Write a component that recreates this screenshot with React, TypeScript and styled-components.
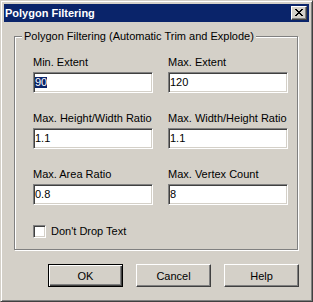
import React from 'react';
import styled, {createGlobalStyle} from "styled-components";

const face = '#d4d0c8';
const shadow = '#808080';
const dark = '#404040';
const caption = '#0a246a';
const uiFont = '"Liberation Sans", Arial, sans-serif';

const GlobalStyle = createGlobalStyle`
  * { box-sizing: border-box; }
  html, body {
    margin: 0;
    padding: 0;
    background: ${face};
  }
  body {
    font-family: ${uiFont};
    font-size: 11px;
    color: #000;
  }
`

const fields = [
    {label: 'Min. Extent', value: '90', selected: true},
    {label: 'Max. Extent', value: '120'},
    {label: 'Max. Height/Width Ratio', value: '1.1'},
    {label: 'Max. Width/Height Ratio', value: '1.1'},
    {label: 'Max. Area Ratio', value: '0.8'},
    {label: 'Max. Vertex Count', value: '8'},
];

const CloseGlyph = () => (
    <svg width="8" height="7" viewBox="0 0 8 7" shapeRendering="crispEdges">
        <path fill="#000" d="M0 0h2v1H0zM6 0h2v1H6zM1 1h2v1H1zM5 1h2v1H5zM2 2h4v1H2zM3 3h2v1H3zM2 4h4v1H2zM1 5h2v1H1zM5 5h2v1H5zM0 6h2v1H0zM6 6h2v1H6z"/>
    </svg>
);

export default function App() {
    return (
        <>
            <GlobalStyle/>
            <Window>
                <TitleBar>
                    <TitleText>Polygon Filtering</TitleText>
                    <CloseButton aria-label="Close"><CloseGlyph/></CloseButton>
                </TitleBar>
                <Body>
                    <GroupBox>
                        <Legend>Polygon Filtering (Automatic Trim and Explode)</Legend>
                        <FieldGrid>
                            {fields.map(f => (
                                <FieldCell key={f.label}>
                                    <Label>{f.label}</Label>
                                    <Field>
                                        {f.selected ? <Selected>{f.value}</Selected> : f.value}
                                    </Field>
                                </FieldCell>
                            ))}
                        </FieldGrid>
                        <CheckRow>
                            <CheckBox/>
                            <CheckLabel>Don't Drop Text</CheckLabel>
                        </CheckRow>
                    </GroupBox>
                    <ButtonRow>
                        <Button $default>OK</Button>
                        <Button>Cancel</Button>
                        <Button>Help</Button>
                    </ButtonRow>
                </Body>
            </Window>
        </>
    );
}

const Window = styled.div`
    width: 313px;
    height: 302px;
    display: flex;
    flex-direction: column;
    background: ${face};
    border: 1px solid;
    border-color: ${face} ${dark} ${dark} ${face};
    box-shadow: inset 1px 1px 0 #fff, inset -1px -1px 0 ${shadow};
    padding: 3px;
`

const TitleBar = styled.div`
    height: 18px;
    flex: none;
    display: flex;
    align-items: center;
    justify-content: space-between;
    background: ${caption};
    padding: 0 2px 0 1px;
`

const TitleText = styled.span`
    color: #fff;
    font-weight: bold;
    font-size: 11px;
    line-height: 18px;
`

const bevel = `
    border: 1px solid;
    border-color: #fff ${dark} ${dark} #fff;
    box-shadow: inset -1px -1px 0 ${shadow};
    background: ${face};
`

const CloseButton = styled.div`
    width: 16px;
    height: 14px;
    display: flex;
    align-items: center;
    justify-content: center;
    padding-bottom: 1px;
    ${bevel}
`

const Body = styled.div`
    flex: 1;
    display: flex;
    flex-direction: column;
    padding: 8px 10px 0 10px;
`

const GroupBox = styled.fieldset`
    margin: 0 1px 0 0;
    padding: 13px 9px 11px 18px;
    border: 1px solid ${shadow};
    box-shadow: inset 1px 1px 0 #fff, 1px 1px 0 #fff;
    min-width: 0;
`

const Legend = styled.legend`
    margin-left: -11px;
    padding: 0 2px;
    line-height: 13px;
    background: ${face};
`

const FieldGrid = styled.div`
    display: grid;
    grid-template-columns: 120px 120px;
    column-gap: 15px;
    row-gap: 19px;
`

const FieldCell = styled.div`
    display: flex;
    flex-direction: column;
`

const Label = styled.span`
    line-height: 13px;
    margin-bottom: 3px;
    white-space: nowrap;
`

const sunken = `
    border: 1px solid;
    border-color: ${shadow} #fff #fff ${shadow};
    box-shadow: inset 1px 1px 0 ${dark}, inset -1px -1px 0 ${face};
    background: #fff;
`

const Field = styled.div`
    height: 21px;
    padding: 4px 1px 0 1px;
    line-height: 11px;
    ${sunken}
`

const Selected = styled.span`
    background: ${caption};
    color: #fff;
    display: inline-block;
    height: 11px;
`

const CheckRow = styled.div`
    display: flex;
    align-items: center;
    gap: 5px;
    margin-top: 20px;
    height: 13px;
`

const CheckBox = styled.div`
    width: 13px;
    height: 13px;
    ${sunken}
`

const CheckLabel = styled.span`
    line-height: 13px;
`

const ButtonRow = styled.div`
    display: flex;
    justify-content: flex-end;
    gap: 13px;
    margin-top: 14px;
`

const Button = styled.div<{ $default?: boolean }>`
    width: 75px;
    height: 23px;
    display: flex;
    align-items: center;
    justify-content: center;
    background: ${face};
    ${p => p.$default ? `
        border: 1px solid #000;
        box-shadow: inset 1px 1px 0 #fff, inset -1px -1px 0 ${dark}, inset -2px -2px 0 ${shadow};
    ` : `
        border: 1px solid;
        border-color: #fff ${dark} ${dark} #fff;
        box-shadow: inset -1px -1px 0 ${shadow};
    `}
`
